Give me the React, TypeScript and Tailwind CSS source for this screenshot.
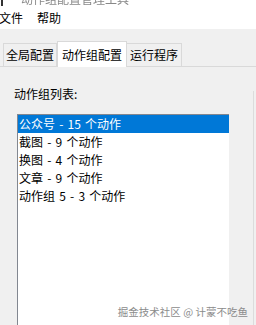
const items = ["公众号 - 15 个动作", "截图 - 9 个动作", "换图 - 4 个动作", "文章 - 9 个动作", "动作组 5 - 3 个动作"];

const font = "font-['Noto_Sans_CJK_SC','Liberation_Sans',sans-serif]";

const App = () => {
  return (
    <div className={`relative w-[256px] h-[325px] overflow-hidden bg-[#f0f0f0] text-[12px] text-black ${font}`}>
      {/* window title, cut off at the top */}
      <div className="h-[6px] bg-white overflow-hidden flex items-start">
        <div className="w-[2px] h-[6px] bg-[#333] ml-[1px]" />
        <div className="ml-[18px] -mt-[7px] h-[12px] leading-[12px] text-[12px] text-[#888] blur-[0.6px]">动作组配置管理工具</div>
      </div>
      {/* menu bar */}
      <div className="h-[23px] bg-white flex items-center leading-[14px]">
        <span className="-ml-[1px]">文件</span>
        <span className="ml-[14px]">帮助</span>
      </div>
      {/* tabs */}
      <div className="mt-[12px] pl-[3px] flex items-end h-[25px] leading-[14px]">
        <div className="h-[23px] w-[54px] border border-b-0 border-[#d9d9d9] flex items-center justify-center">全局配置</div>
        <div className="relative z-10 -mb-[1px] h-[26px] w-[70px] bg-white border border-b-0 border-[#d9d9d9] flex items-center justify-center">动作组配置</div>
        <div className="h-[23px] w-[55px] border border-b-0 border-l-0 border-[#d9d9d9] flex items-center justify-center">运行程序</div>
      </div>
      {/* tab page */}
      <div className="border-t border-[#d9d9d9] h-[260px] flex">
        <div className="flex-1 flex flex-col">
          <div className="mt-[21px] ml-[14px] leading-[12px]">动作组列表:</div>
          <div className="mt-[14px] ml-[17px] w-[212px] flex-1 bg-white border-l border-t border-[#828790] [word-spacing:1.5px]">
            {items.map((t, i) => (
              <div
                key={t}
                className={
                  i === 0
                    ? "h-[18px] flex items-center bg-[#0078d7] text-white pl-[1px] leading-[14px]"
                    : "h-[18px] flex items-center pl-[1px] leading-[14px]"
                }
              >
                {t}
              </div>
            ))}
          </div>
        </div>
        <div className="mt-[24px] mr-[2px] w-[1px] bg-[#dcdcdc]" />
      </div>
      {/* watermark */}
      <div className="absolute right-[8px] bottom-[7px] text-[10.5px] leading-[12px] text-[#8c8c8c]">掘金技术社区 @ 计蒙不吃鱼</div>
    </div>
  );
};

export default App;
